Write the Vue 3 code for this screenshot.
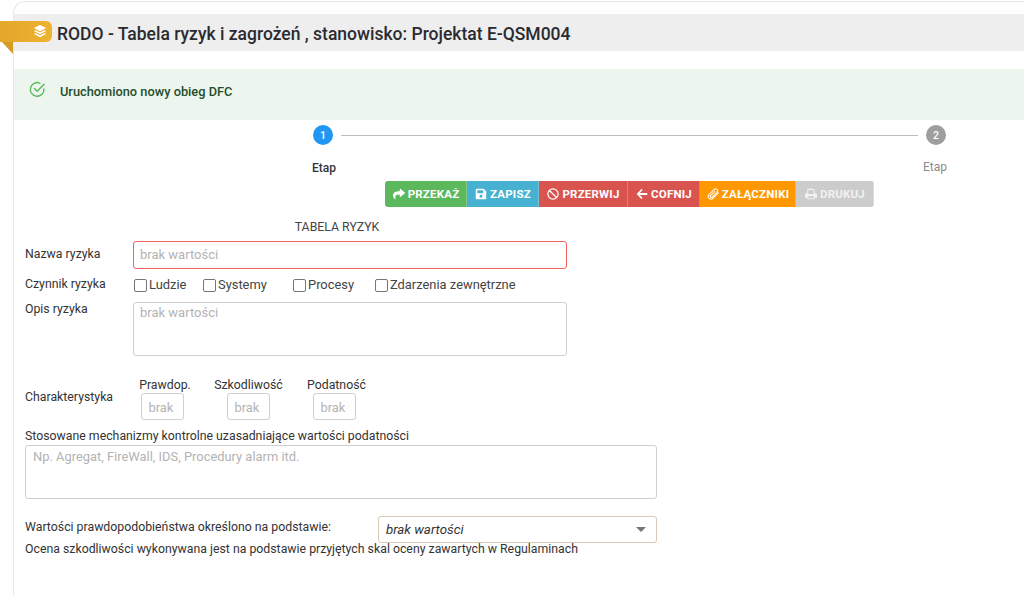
<script setup>
const buttons = [
  { label: 'PRZEKAŻ', cls: 'green', icon: 'share', width: 82 },
  { label: 'ZAPISZ', cls: 'blue', icon: 'save', width: 72 },
  { label: 'PRZERWIJ', cls: 'red', icon: 'ban', width: 89 },
  { label: 'COFNIJ', cls: 'red', icon: 'back', width: 72 },
  { label: 'ZAŁĄCZNIKI', cls: 'orange', icon: 'clip', width: 96 },
  { label: 'DRUKUJ', cls: 'gray', icon: 'print', width: 78 }
]
const factors = [
  { label: 'Ludzie', width: 69 },
  { label: 'Systemy', width: 90 },
  { label: 'Procesy', width: 82 },
  { label: 'Zdarzenia zewnętrzne', width: 150 }
]
const traits = [
  { label: 'Prawdop.', width: 86, nudge: 6 },
  { label: 'Szkodliwość', width: 86, nudge: 1 },
  { label: 'Podatność', width: 86, nudge: 5 }
]
</script>

<template>
  <div class="page">
    <div class="card">
      <header class="head">
        <div class="ribbon">
          <svg class="layers" viewBox="0 0 16 16">
            <path d="M8 1 15 4.600 8 8.200 1 4.600z" fill="#fff" />
            <path d="M3 7 8 9.600 13 7 15 8 8 11.600 1 8z" fill="#fff" />
            <path d="M3 10.400 8 13 13 10.400 15 11.400 8 15 1 11.400z" fill="#fff" />
          </svg>
          <span class="fold"></span>
        </div>
        <h1>RODO - Tabela ryzyk i zagrożeń , stanowisko: Projektat E-QSM004</h1>
      </header>

      <div class="alert">
        <svg class="check" viewBox="0 0 18 18" fill="none" stroke="#5cb85c" stroke-width="1.500" stroke-linecap="round" stroke-linejoin="round">
          <path d="M15.800 8.300A7.200 7.200 0 1 1 11.500 2.300" />
          <path d="M5.800 8 8.600 10.800 16 3.400" />
        </svg>
        <span>Uruchomiono nowy obieg DFC</span>
      </div>

      <div class="stepper">
        <div class="step first">
          <span class="dot blue-dot">1</span>
          <span class="step-label strong">Etap</span>
        </div>
        <div class="line"></div>
        <div class="step last">
          <span class="dot gray-dot">2</span>
          <span class="step-label">Etap</span>
        </div>
      </div>

      <div class="toolbar">
        <button v-for="b in buttons" :key="b.label" class="btn" :class="b.cls" :style="{ width: b.width + 'px' }">
          <svg v-if="b.icon === 'share'" viewBox="0 0 512 512" class="ic"><path fill="currentColor" d="M503.691 189.836L327.687 37.851C312.281 24.546 288 35.347 288 56.015v80.053C127.371 137.907 0 170.100 0 322.326c0 61.441 39.581 122.309 83.333 154.132 13.653 9.931 33.111-2.533 28.077-18.631C66.066 312.814 132.917 274.316 288 272.085V360c0 20.700 24.300 31.453 39.687 18.164l176.004-152c11.071-9.562 11.086-26.753 0-36.328z" /></svg>
          <svg v-else-if="b.icon === 'save'" viewBox="0 0 448 512" class="ic"><path fill="currentColor" d="M433.941 129.941l-83.882-83.882A48 48 0 0 0 316.118 32H48C21.490 32 0 53.490 0 80v352c0 26.510 21.490 48 48 48h352c26.510 0 48-21.490 48-48V163.882a48 48 0 0 0-14.059-33.941zM224 416c-35.346 0-64-28.654-64-64 0-35.346 28.654-64 64-64s64 28.654 64 64c0 35.346-28.654 64-64 64zm96-304.520V212c0 6.627-5.373 12-12 12H76c-6.627 0-12-5.373-12-12V108c0-6.627 5.373-12 12-12h228.520c3.183 0 6.235 1.264 8.485 3.515l3.480 3.480A11.996 11.996 0 0 1 320 111.480z" /></svg>
          <svg v-else-if="b.icon === 'ban'" viewBox="0 0 16 16" class="ic" fill="none" stroke="currentColor" stroke-width="1.700"><circle cx="8" cy="8" r="6.800" /><path d="M3.300 3.300 12.700 12.700" /></svg>
          <svg v-else-if="b.icon === 'back'" viewBox="0 0 16 16" class="ic" fill="none" stroke="currentColor" stroke-width="2.400"><path d="M8 2 2.500 8 8 14M3 8H15" /></svg>
          <svg v-else-if="b.icon === 'clip'" viewBox="0 0 16 16" class="ic" fill="none" stroke="currentColor" stroke-width="1.400" stroke-linecap="round"><path d="M15 6.500 7.500 14C4.500 16.500 -.500 12.500 2.500 9L9.500 2C12 -.300 15.800 2.800 13.300 5.800L6.800 12.300C5.300 13.500 3.500 11.800 4.800 10.200L10.500 4.500" /></svg>
          <svg v-else viewBox="0 0 16 16" class="ic"><path fill="currentColor" d="M3 1h8l2 2v4h1.500A1.500 1.500 0 0 1 16 8.500V13h-3v2H3v-2H0V8.500A1.500 1.500 0 0 1 1.500 7H3zm1.500 1.500V8h7V3.500l-1-1zm0 8.500v2.500h7V11z" /></svg>
          {{ b.label }}
        </button>
      </div>

      <form class="form" @submit.prevent>
        <div class="title">TABELA RYZYK</div>

        <div class="row name-row">
          <label class="lbl">Nazwa ryzyka</label>
          <div class="input invalid">brak wartości</div>
        </div>

        <div class="row factor-row">
          <label class="lbl">Czynnik ryzyka</label>
          <div class="factors">
            <label v-for="f in factors" :key="f.label" class="factor" :style="{ width: f.width + 'px' }">
              <span class="box"></span>{{ f.label }}
            </label>
          </div>
        </div>

        <div class="row desc-row">
          <label class="lbl">Opis ryzyka</label>
          <div class="input area">brak wartości</div>
        </div>

        <div class="row traits-row">
          <label class="lbl">Charakterystyka</label>
          <div class="traits">
            <div v-for="t in traits" :key="t.label" class="trait" :style="{ width: t.width + 'px' }">
              <span class="trait-name" :style="{ paddingLeft: t.nudge + 'px' }">{{ t.label }}</span>
              <input class="mini" readonly placeholder="brak wartości" />
            </div>
          </div>
        </div>

        <div class="controls-label">Stosowane mechanizmy kontrolne uzasadniające wartości podatności</div>
        <div class="input wide">Np. Agregat, FireWall, IDS, Procedury alarm itd.</div>

        <div class="row select-row">
          <label class="plain">Wartości prawdopodobieństwa określono na podstawie:</label>
          <div class="select"><em>brak wartości</em><span class="caret"></span></div>
        </div>
        <div class="note">Ocena szkodliwości wykonywana jest na podstawie przyjętych skal oceny zawartych w Regulaminach</div>
      </form>
    </div>
  </div>
</template>

<style>
html, body { margin: 0; background: #fff; overflow: hidden; }
</style>

<style scoped>
.page {
  height: 595px;
  overflow: hidden;
  box-sizing: border-box;
  padding: 1px 0 0 13px;
  font-family: Roboto, "Liberation Sans", sans-serif;
  color: #333;
}
.card {
  height: 700px;
  border: 1px solid #e6e6e6;
  border-right: 0;
  border-top-left-radius: 12px;
  padding-top: 12px;
  box-sizing: border-box;
}
.head {
  position: relative;
  box-sizing: border-box;
  height: 37px;
  background: #eeeeef;
  display: flex;
  align-items: center;
  padding: 2px 0 0 43px;
}
h1 {
  margin: 0;
  font-size: 17.500px;
  font-weight: 500;
  color: #2b2b2f;
  white-space: nowrap;
}
.ribbon {
  position: absolute;
  left: -14px;
  top: 7px;
  width: 52px;
  height: 21px;
  background: linear-gradient(90deg, #e2a72c, #eeb22f);
  border-radius: 0 6px 6px 0;
}
.layers {
  position: absolute;
  right: 5px;
  top: 3px;
  width: 14px;
  height: 14px;
}
.fold {
  position: absolute;
  left: 2px;
  top: 21px;
  width: 0;
  height: 0;
  border-top: 12px solid #d59c25;
  border-left: 11px solid transparent;
}
.alert {
  box-sizing: border-box;
  margin-top: 18px;
  height: 51px;
  background: #edf6ee;
  display: flex;
  align-items: center;
  padding: 0 0 6px 15px;
  gap: 14px;
  font-size: 12.800px;
  font-weight: 500;
  color: #1f4d2b;
}
.check { width: 17px; height: 17px; margin-top: -4px; }
.stepper {
  display: flex;
  align-items: flex-start;
  margin-top: 5px;
  height: 56px;
  padding-left: 299px;
}
.step {
  width: 20px;
  display: flex;
  flex-direction: column;
  align-items: center;
  flex: none;
}
.dot {
  width: 20px;
  height: 20px;
  border-radius: 50%;
  color: #fff;
  font-size: 10.500px;
  font-weight: 500;
  display: flex;
  align-items: center;
  justify-content: center;
}
.blue-dot { background: #2196f3; }
.gray-dot { background: #9e9e9e; }
.step-label {
  margin-top: 15px;
  font-size: 12px;
  line-height: 14px;
  color: #8a8a8a;
}
.last .step-label { margin-right: 2px; }
.first .step-label { margin-top: 16px; margin-left: 2px; }
.strong { color: #333; font-weight: 500; }
.line {
  width: 577px;
  height: 1px;
  background: #bdbdbd;
  margin: 10px 8px 0;
  flex: none;
}
.toolbar {
  display: flex;
  margin-left: 371px;
  height: 26px;
  width: 489px;
  border-radius: 3px;
  overflow: hidden;
}
.btn {
  border: 0;
  padding: 0;
  height: 26px;
  color: #fff;
  font-family: inherit;
  font-size: 11.500px;
  font-weight: 700;
  letter-spacing: .2px;
  display: flex;
  align-items: center;
  justify-content: center;
  gap: 3px;
  white-space: nowrap;
  box-shadow: inset -1px 0 0 rgba(255, 255, 255, .25);
}
.ic { width: 12px; height: 12px; flex: none; }
.green { background: #5cb85c; }
.blue { background: #46b1d1; }
.red { background: #d9534f; }
.orange { background: #ff9800; }
.gray { background: #cccccc; color: #f1f1f1; }
.form {
  padding-left: 11px;
  font-size: 12.300px;
}
.title {
  margin-top: 13px;
  width: 624px;
  text-align: center;
  line-height: 14px;
  color: #444;
}
.row { display: flex; }
.lbl { width: 108px; flex: none; line-height: 14px; }
.input {
  box-sizing: border-box;
  border: 1px solid #d0d0d0;
  border-radius: 3px;
  color: #b3b3b3;
  font-size: 13px;
  padding-left: 6px;
  background: #fff;
}
.name-row { margin-top: 7px; }
.name-row .lbl { margin-top: 6px; }
.invalid {
  width: 434px;
  height: 28px;
  line-height: 26px;
  border-color: #f0625b;
}
.factor-row { margin-top: 8px; }
.factors { display: flex; margin-left: 1px; }
.factor {
  display: flex;
  align-items: center;
  font-size: 12.900px;
  line-height: 16px;
  color: #444;
  white-space: nowrap;
}
.box {
  box-sizing: border-box;
  width: 13px;
  height: 13px;
  border: 1px solid #767676;
  border-radius: 2px;
  margin-right: 2px;
}
.desc-row { margin-top: 9px; }
.area {
  width: 434px;
  height: 54px;
  padding-top: 2px;
  line-height: 15px;
}
.traits-row { margin-top: 22px; align-items: flex-end; }
.traits-row .lbl { margin-bottom: 16px; }
.traits { display: flex; margin-left: -14px; }
.trait {
  display: flex;
  flex-direction: column;
  align-items: center;
}
.trait-name { line-height: 14px; white-space: nowrap; margin-bottom: 1px; }
.mini {
  box-sizing: border-box;
  display: block;
  width: 43px;
  height: 27px;
  margin: 0;
  border: 1px solid #d0d0d0;
  border-radius: 3px;
  padding: 1px 6px 0 7px;
  background: #fff;
  font-family: inherit;
  font-size: 12.900px;
  outline: none;
}
.mini::placeholder { color: #b3b3b3; opacity: 1; }
.controls-label { margin-top: 9px; line-height: 14px; }
.wide {
  margin-top: 2px;
  width: 632px;
  height: 54px;
  padding: 3px 0 0 7px;
  line-height: 15px;
  font-size: 12.900px;
}
.select-row { margin-top: 17px; align-items: flex-start; }
.plain { width: 353px; flex: none; line-height: 14px; margin-top: 4px; }
.select {
  box-sizing: border-box;
  width: 279px;
  height: 27px;
  border: 1px solid #dcc9b5;
  border-radius: 3px;
  padding: 0 10px 0 7px;
  display: flex;
  align-items: center;
  justify-content: space-between;
  font-size: 13.300px;
  color: #333;
}
.caret {
  border-top: 5px solid #777;
  border-left: 5px solid transparent;
  border-right: 5px solid transparent;
}
.note { margin-top: -1px; line-height: 14px; }
</style>
